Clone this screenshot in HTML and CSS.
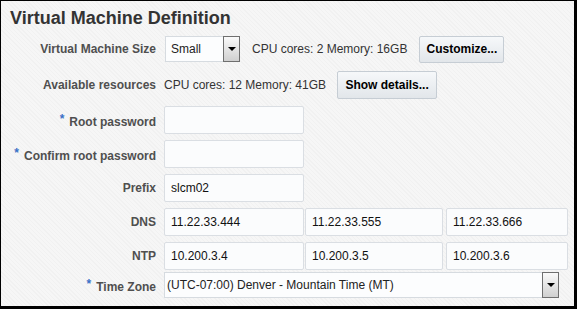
FILE: index.html
```html
<!DOCTYPE html>
<html lang="en">
<head>
<meta charset="utf-8">
<title>Virtual Machine Definition</title>
<link rel="stylesheet" href="styles.css">
</head>
<body>
<div class="panel">
  <h1 class="title">Virtual Machine Definition</h1>
  <div class="form">
    <div class="row r1">
      <label class="lbl">Virtual Machine Size</label>
      <div class="select small"><span class="val">Small</span><span class="dd"></span></div>
      <span class="info gap12">CPU cores: 2 Memory: 16GB</span>
      <button class="btn btn-cust">Customize...</button>
    </div>
    <div class="row r2">
      <label class="lbl">Available resources</label>
      <span class="info">CPU cores: 12 Memory: 41GB</span>
      <button class="btn btn-show">Show details...</button>
    </div>
    <div class="row r3">
      <label class="lbl"><span class="req">*</span>Root password</label>
      <div class="inp"></div>
    </div>
    <div class="row">
      <label class="lbl"><span class="req">*</span>Confirm root password</label>
      <div class="inp"></div>
    </div>
    <div class="row">
      <label class="lbl">Prefix</label>
      <div class="inp">slcm02</div>
    </div>
    <div class="row">
      <label class="lbl">DNS</label>
      <div class="inp">11.22.33.444</div>
      <div class="inp w2">11.22.33.555</div>
      <div class="inp w3">11.22.33.666</div>
    </div>
    <div class="row">
      <label class="lbl">NTP</label>
      <div class="inp">10.200.3.4</div>
      <div class="inp w2">10.200.3.5</div>
      <div class="inp w3">10.200.3.6</div>
    </div>
    <div class="row rtz">
      <label class="lbl"><span class="req">*</span>Time Zone</label>
      <div class="select tz"><span class="val">(UTC-07:00) Denver - Mountain Time (MT)</span><span class="dd"></span></div>
    </div>
  </div>
</div>
</body>
</html>
```

FILE: styles.css
```css
html, body {
  margin: 0;
  padding: 0;
}
body {
  background: #000;
  width: 577px;
  height: 309px;
  overflow: hidden;
  font-family: "Liberation Sans", Arial, sans-serif;
}
.panel {
  margin: 1px 3px 3px 1px;
  height: 305px;
  box-sizing: border-box;
  padding: 6px 0 0 9px;
  background-color: #f4f4f4;
  background-image: repeating-linear-gradient(45deg, #f1f1f1 0 1px, #f6f6f6 1px 3px);
}
.title {
  margin: 0;
  font-size: 18px;
  line-height: 22px;
  font-weight: bold;
  color: #333;
}
.form {
  margin-top: 6px;
  display: flex;
  flex-direction: column;
}
.row {
  display: flex;
  align-items: center;
  height: 28px;
  margin-top: 6px;
}
.row.r1 { margin-top: 0; }
.row.r2 { margin-top: 8px; }
.row.r3 { margin-top: 7px; }
.row.rtz { margin-top: 2px; height: 26px; }
.lbl {
  flex-shrink: 0;
  width: 146px;
  margin-right: 8px;
  text-align: right;
  font-size: 12px;
  font-weight: bold;
  color: #4f4f4f;
  white-space: nowrap;
}
.req {
  color: #3a70c6;
  font-weight: bold;
  margin-right: 5px;
  vertical-align: 3px;
}
.select {
  display: flex;
  align-items: center;
  height: 26px;
  box-sizing: border-box;
  border: 1px solid #d6dbe0;
  background: #fcfdfe;
  font-size: 12px;
  color: #222;
}
.select.small {
  width: 75px;
  margin-left: 1px;
  padding-left: 5px;
}
.select.tz {
  width: 395px;
  padding-left: 2px;
}
.val {
  white-space: nowrap;
}
.dd {
  align-self: stretch;
  margin: -1px -1px -1px auto;
  width: 17px;
  box-sizing: border-box;
  border: 1px solid #6f6f6f;
  background: linear-gradient(#fafafa, #d0d0d0);
  display: flex;
  align-items: center;
  justify-content: center;
}
.dd::after {
  content: "";
  width: 0;
  height: 0;
  border-left: 4px solid transparent;
  border-right: 4px solid transparent;
  border-top: 4px solid #000;
  margin-top: -1px;
}
.info {
  font-size: 12px;
  color: #333;
  white-space: nowrap;
}
.info.gap12 { margin-left: 12px; }
.btn {
  height: 27px;
  padding: 0;
  border: 1px solid #c6cdd4;
  border-radius: 2px;
  background: linear-gradient(#f6f8fa, #e2e6ea);
  font-family: "Liberation Sans", Arial, sans-serif;
  font-size: 12px;
  font-weight: bold;
  color: #000;
  text-align: center;
}
.btn-cust {
  width: 85px;
  margin-left: 12px;
}
.btn-show {
  width: 100px;
  height: 28px;
  margin-left: 11px;
}
.inp {
  flex-shrink: 0;
  width: 140px;
  height: 28px;
  box-sizing: border-box;
  border: 1px solid #dadee3;
  border-radius: 2px;
  background: #fbfcfd;
  padding-left: 6px;
  display: flex;
  align-items: center;
  font-size: 12px;
  color: #111;
}
.inp.w2 {
  width: 138px;
  margin-left: 1px;
}
.inp.w3 {
  width: 122px;
  margin-left: 3px;
}
```
